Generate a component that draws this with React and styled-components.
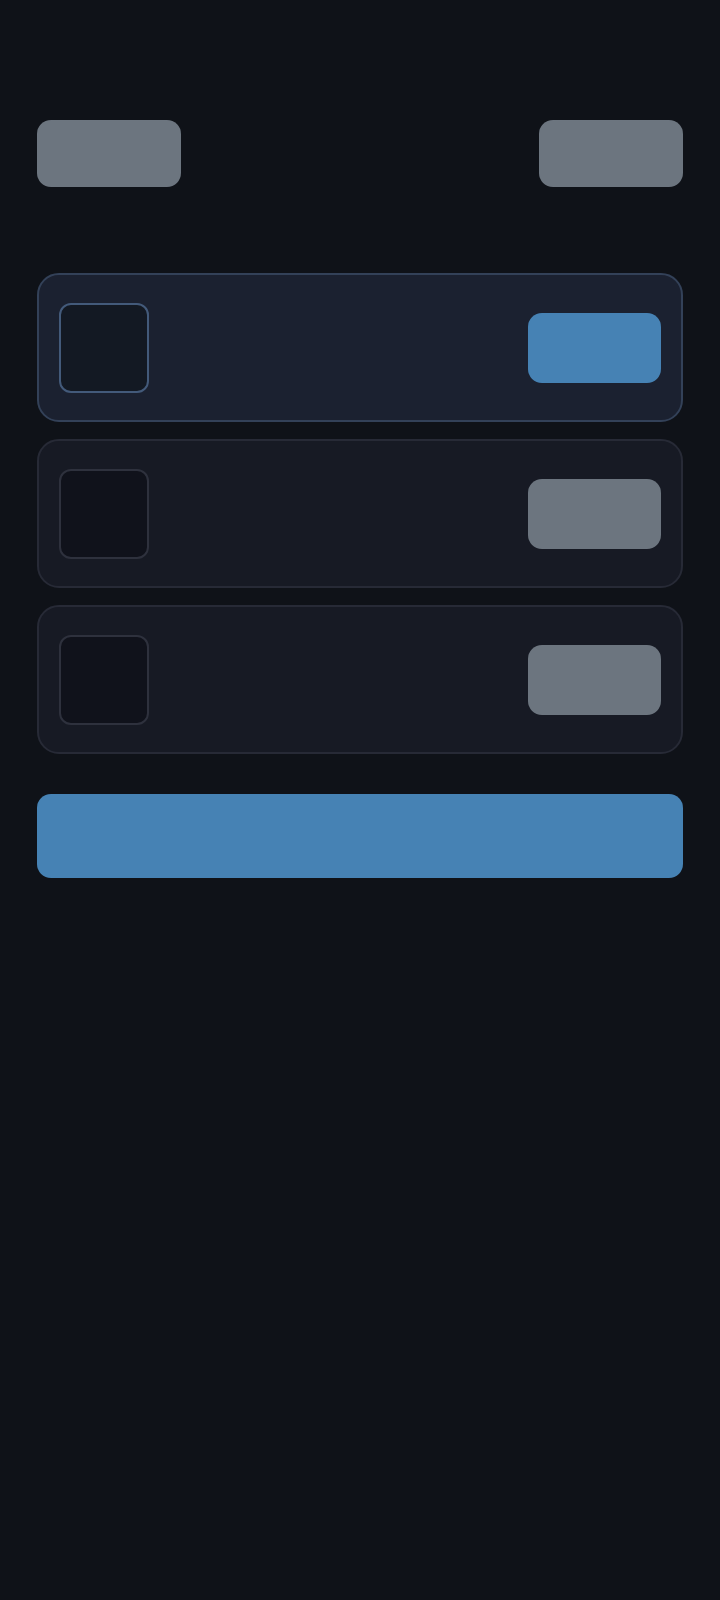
import React from "react";
import styled, { createGlobalStyle } from "styled-components";

const GlobalStyle = createGlobalStyle`
  html, body {
    margin: 0;
    padding: 0;
    background: #0f1218;
    font-family: "Inter", "Liberation Sans", sans-serif;
  }
  #root {
    min-height: 1600px;
    background: #0f1218;
  }
`;

const Page = styled.div`
  display: flex;
  flex-direction: column;
  padding: 120px 37px 0;
`;

const Toolbar = styled.div`
  display: flex;
  justify-content: space-between;
  align-items: center;
  margin-bottom: 86px;
`;

const Button = styled.button`
  border: none;
  padding: 0;
  cursor: pointer;
  background: ${({ $primary }) => ($primary ? "#4682b4" : "#6c757f")};
  border-radius: 14px;
`;

const NavButton = styled(Button)`
  width: 144px;
  height: 67px;
`;

const List = styled.div`
  display: flex;
  flex-direction: column;
  gap: 17px;
`;

const Card = styled.div`
  display: flex;
  align-items: center;
  justify-content: space-between;
  padding: 27.5px 20px;
  border-radius: 22px;
  border: 2px solid ${({ $active }) => ($active ? "#334158" : "#272a36")};
  background: ${({ $active }) => ($active ? "#1b2130" : "#171a24")};
`;

const Thumb = styled.div`
  width: 90px;
  height: 90px;
  box-sizing: border-box;
  border-radius: 12px;
  border: 2px solid ${({ $active }) => ($active ? "#435a7a" : "#2e313d")};
  background: ${({ $active }) => ($active ? "#131923" : "#10121b")};
`;

const CardButton = styled(Button)`
  width: 133px;
  height: 70px;
`;

const Submit = styled(Button)`
  margin-top: 40px;
  width: 100%;
  height: 84px;
`;

const items = [{ id: 1, active: true }, { id: 2 }, { id: 3 }];

const App = () => {
  return (
    <>
      <GlobalStyle />
      <Page>
        <Toolbar>
          <NavButton />
          <NavButton />
        </Toolbar>

        <List>
          {items.map((item) => (
            <Card key={item.id} $active={item.active}>
              <Thumb $active={item.active} />
              <CardButton $primary={item.active} />
            </Card>
          ))}
        </List>

        <Submit $primary />
      </Page>
    </>
  );
};

export default App;
